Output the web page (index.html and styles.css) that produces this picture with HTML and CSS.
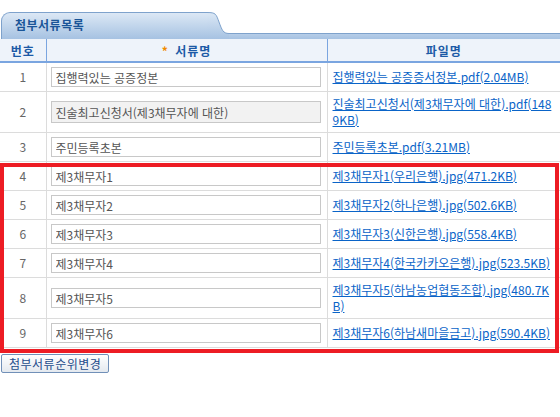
FILE: index.html
```html
<!DOCTYPE html>
<html lang="ko">
<head>
    <meta charset="UTF-8">
    <meta name="viewport" content="width=device-width, initial-scale=1.0">
    <title>첨부서류목록</title>
    <link rel="stylesheet" href="styles.css">
</head>
<body>
    <div class="tab-bar">
        <div class="tab">첨부서류목록</div>
        <svg class="tab-curve" width="22" height="27" viewBox="0 0 22 27">
            <defs>
                <linearGradient id="tabGrad" x1="0" y1="0" x2="0" y2="1">
                    <stop offset="0" stop-color="#dce8f5"/>
                    <stop offset="1" stop-color="#a6c2e2"/>
                </linearGradient>
            </defs>
            <path d="M0 0.5 C9 0.5 9 2 12 10 C15 18 16 21.5 22 21.5 L22 27 L0 27 Z" fill="url(#tabGrad)"/>
            <path d="M0 0.5 C9 0.5 9 2 12 10 C15 18 16 21.5 22 21.5" fill="none" stroke="#7ea2cc" stroke-width="1"/>
        </svg>
        <div class="band"></div>
    </div>

    <table class="doc-table">
        <colgroup>
            <col class="col-no">
            <col class="col-name">
            <col class="col-file">
        </colgroup>
        <thead>
            <tr>
                <th>번호</th>
                <th><span class="req">*</span> 서류명</th>
                <th>파일명</th>
            </tr>
        </thead>
        <tbody>
            <tr>
                <td class="no">1</td>
                <td><input class="name-input" type="text" value="집행력있는 공증정본"></td>
                <td class="file"><a href="#">집행력있는 공증증서정본.pdf(2.04MB)</a></td>
            </tr>
            <tr>
                <td class="no">2</td>
                <td><input class="name-input readonly" type="text" value="진술최고신청서(제3채무자에 대한)" readonly></td>
                <td class="file"><a href="#">진술최고신청서(제3채무자에 대한).pdf(1489KB)</a></td>
            </tr>
            <tr>
                <td class="no">3</td>
                <td><input class="name-input" type="text" value="주민등록초본"></td>
                <td class="file"><a href="#">주민등록초본.pdf(3.21MB)</a></td>
            </tr>
            <tr>
                <td class="no">4</td>
                <td><input class="name-input" type="text" value="제3채무자1"></td>
                <td class="file"><a href="#">제3채무자1(우리은행).jpg(471.2KB)</a></td>
            </tr>
            <tr>
                <td class="no">5</td>
                <td><input class="name-input" type="text" value="제3채무자2"></td>
                <td class="file"><a href="#">제3채무자2(하나은행).jpg(502.6KB)</a></td>
            </tr>
            <tr>
                <td class="no">6</td>
                <td><input class="name-input" type="text" value="제3채무자3"></td>
                <td class="file"><a href="#">제3채무자3(신한은행).jpg(558.4KB)</a></td>
            </tr>
            <tr>
                <td class="no">7</td>
                <td><input class="name-input" type="text" value="제3채무자4"></td>
                <td class="file"><a href="#">제3채무자4(한국카카오은행).jpg(523.5KB)</a></td>
            </tr>
            <tr>
                <td class="no">8</td>
                <td><input class="name-input" type="text" value="제3채무자5"></td>
                <td class="file"><a href="#">제3채무자5(하남농업협동조합).jpg(480.7KB)</a></td>
            </tr>
            <tr>
                <td class="no">9</td>
                <td><input class="name-input" type="text" value="제3채무자6"></td>
                <td class="file"><a href="#">제3채무자6(하남새마을금고).jpg(590.4KB)</a></td>
            </tr>
        </tbody>
    </table>

    <div class="actions">
        <button class="btn" type="button">첨부서류순위변경</button>
    </div>

    <!-- highlight box drawn over rows 4-9 -->
    <div class="highlight"></div>
</body>
</html>
```

FILE: styles.css
```css
body {
    margin: 0;
    padding-top: 11px;
    font-family: "Noto Sans CJK KR", "Liberation Sans", sans-serif;
    font-size: 12px;
    color: #555;
    background: #fff;
    position: relative;
}

.tab-bar {
    display: flex;
    align-items: flex-end;
    height: 28px;
}

.tab {
    width: 206px;
    height: 27px;
    padding-left: 13px;
    box-sizing: border-box;
    border-top: 1px solid #7ea2cc;
    border-left: 1px solid #7ea2cc;
    border-radius: 9px 0 0 0;
    margin-left: 1px;
    background: linear-gradient(#dce8f5, #a6c2e2);
    color: #1a5598;
    font-weight: bold;
    font-size: 12px;
    letter-spacing: 0.5px;
    line-height: 24px;
}

.tab-curve {
    display: block;
    flex: none;
}

.band {
    flex: 1;
    height: 5px;
    border-top: 1px solid #7ea2cc;
    background: linear-gradient(#b6cde8, #a6c2e2);
}

.doc-table {
    width: 560px;
    border-collapse: collapse;
    table-layout: fixed;
}

.col-no { width: 46px; }
.col-name { width: 281px; }
.col-file { width: 233px; }

.doc-table th {
    height: 22px;
    background: #eef3fa;
    border-bottom: 2px solid #7aa5e0;
    border-left: 1px solid #7aa5e0;
    color: #1c5aa6;
    font-size: 12px;
    letter-spacing: 1px;
    padding: 0;
}

.doc-table th:first-child {
    border-left: none;
}

.req {
    color: #f08a00;
    margin-right: 2px;
}

.doc-table td {
    border-bottom: 1px solid #dcdcdc;
    border-left: 1px solid #dcdcdc;
    padding: 4px;
    vertical-align: middle;
    line-height: 16px;
}

.doc-table td:first-child {
    border-left: none;
}

.no {
    text-align: center;
    color: #666;
}

.name-input {
    display: block;
    width: 270px;
    height: 20px;
    box-sizing: border-box;
    margin: 0;
    padding: 0 4px;
    border: 1px solid #c8c8c8;
    font-family: "Noto Sans CJK KR", "Liberation Sans", sans-serif;
    font-size: 12px;
    color: #555;
    outline: none;
}

.name-input.readonly {
    background: #f2f2f2;
    height: 22px;
}

.doc-table td.file {
    padding-left: 5px;
    padding-right: 2px;
    word-break: break-all;
}

.file a {
    color: #0a64c8;
    text-decoration: underline;
}

.actions {
    padding: 6px 1px;
}

.btn {
    height: 19px;
    padding: 0 7px;
    border: 1px solid #7190b8;
    border-radius: 2px;
    background: linear-gradient(#ffffff, #e4e9ef);
    color: #1e4d8c;
    font-family: "Noto Sans CJK KR", "Liberation Sans", sans-serif;
    font-size: 12px;
    letter-spacing: 0.5px;
    line-height: 16px;
}

.highlight {
    position: absolute;
    left: 0;
    top: 163px;
    width: 559px;
    height: 190px;
    box-sizing: border-box;
    border: 4px solid #ed1c24;
    pointer-events: none;
}
```
